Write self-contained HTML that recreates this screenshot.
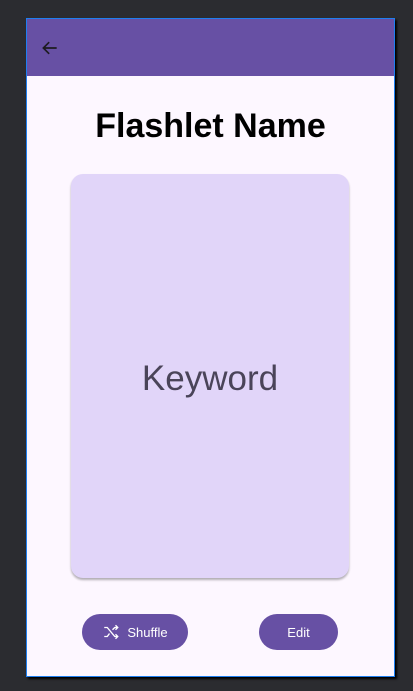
<!DOCTYPE html>
<html><head><style>
body{margin:0;width:413px;height:691px;background:#2b2c30;position:relative;overflow:hidden;font-family:"Liberation Sans",sans-serif}
.frame{position:absolute;left:26px;top:18px;width:367px;height:657px;border:1px solid #1e7ff0;background:#fdf7ff;box-shadow:2px 2px 2px #000}
.hdr{position:absolute;left:0;top:0;width:367px;height:57px;background:#6750a4}
.title{position:absolute;left:0;width:367px;top:88px;text-align:center;font-size:34px;font-weight:bold;color:#000}
.card{position:absolute;left:44px;top:155px;width:278px;height:404px;background:#e1d5f9;border-radius:12px;box-shadow:0 2px 2px rgba(0,0,0,.3)}
.kw{position:absolute;left:0;width:100%;top:185px;text-align:center;font-size:35px;color:#4a4459}
.btn{position:absolute;top:595px;height:36px;border-radius:18px;background:#6750a4;color:#fff;font-size:13px;display:flex;align-items:center;justify-content:center}
</style></head><body>
<div class="frame">
<div class="hdr"><svg style="position:absolute;left:13px;top:19px" width="20" height="20" viewBox="0 0 24 24"><path d="M20 12H5M11 5l-7 7 7 7" stroke="#1d1b20" stroke-width="2" fill="none"/></svg></div>
<div class="title">Flashlet Name</div>
<div class="card"><div class="kw">Keyword</div></div>
<div class="btn" style="left:55px;width:106px"><svg width="18" height="18" viewBox="0 0 24 24" style="margin-right:7px"><path d="M3 6h4l10 12h3M3 18h4l3-4M14 9l3-3h3M18 3l3 3-3 3M18 15l3 3-3 3" stroke="#fff" stroke-width="1.8" fill="none"/></svg>Shuffle</div>
<div class="btn" style="left:232px;width:79px">Edit</div>
</div>
</body></html>
